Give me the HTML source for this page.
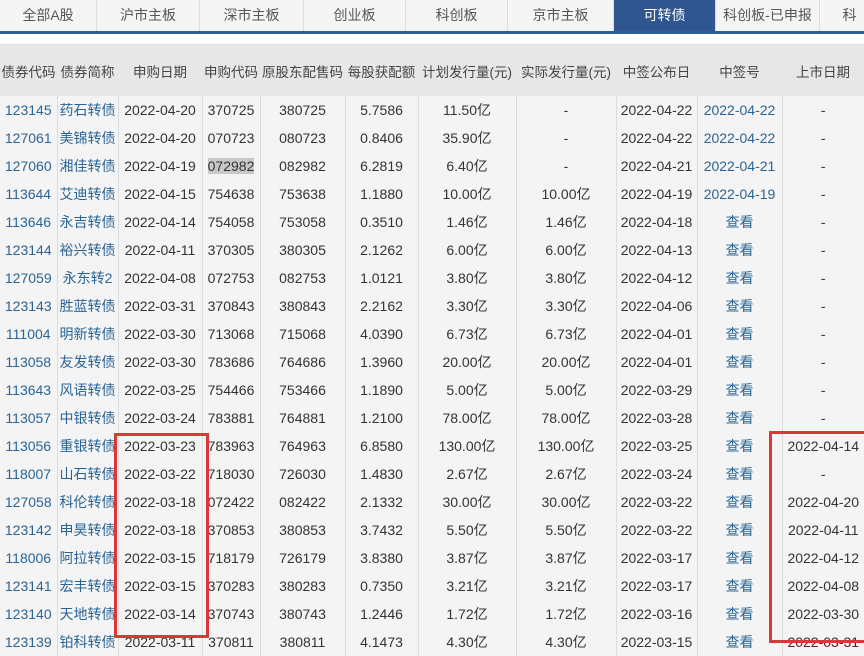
<!DOCTYPE html>
<html><head><meta charset="utf-8"><style>
body{margin:0;width:864px;height:642px;overflow:hidden;background:#fff;font-family:"Liberation Sans","Noto Sans CJK SC",sans-serif;font-size:14px;color:#333;position:relative}
.tabs{position:absolute;left:0;top:0;width:864px;height:31px;background:#f5f5f5;border-bottom:3px solid #2f5f8f}
.tab{position:absolute;top:0;height:31px;line-height:30px;text-align:center;color:#555;font-size:14px;border-right:1px solid #ddd;box-sizing:border-box}
.tab.on{background:#2f5690;color:#fff}
table{position:absolute;left:0;top:44px;border-collapse:collapse;table-layout:fixed;width:864px}
th{height:51px;background:#e7e7e7;font-weight:normal;color:#444;padding:0;white-space:nowrap;border-top:1px solid #ddd;font-size:13.5px}
td{height:28px;padding:0;text-align:center;white-space:nowrap;border-left:1px solid #dcdcdc;background:#f4f4f4;overflow:hidden}
td:first-child{border-left:none}
.l{color:#2a6496}
.r{position:absolute;border:3px solid #d9383a;box-sizing:border-box}
</style></head><body>
<div class="tabs">
<div class="tab" style="left:0;width:97px">全部A股</div>
<div class="tab" style="left:97px;width:103px">沪市主板</div>
<div class="tab" style="left:200px;width:104px">深市主板</div>
<div class="tab" style="left:304px;width:102px">创业板</div>
<div class="tab" style="left:406px;width:102px">科创板</div>
<div class="tab" style="left:508px;width:106px">京市主板</div>
<div class="tab on" style="left:614px;width:102px">可转债</div>
<div class="tab" style="left:716px;width:104px">科创板-已申报</div>
<div class="tab" style="left:820px;width:60px">科</div>
</div>
<table>
<colgroup><col style="width:57px"><col style="width:61px"><col style="width:84px"><col style="width:58px"><col style="width:85px"><col style="width:73px"><col style="width:98px"><col style="width:100px"><col style="width:81px"><col style="width:85px"><col style="width:82px"></colgroup>
<tr><th>债券代码</th><th>债券简称</th><th>申购日期</th><th>申购代码</th><th>原股东配售码</th><th>每股获配额</th><th>计划发行量(元)</th><th>实际发行量(元)</th><th>中签公布日</th><th>中签号</th><th>上市日期</th></tr>
<tr><td class="l">123145</td><td class="l">药石转债</td><td>2022-04-20</td><td>370725</td><td>380725</td><td>5.7586</td><td>11.50亿</td><td>-</td><td>2022-04-22</td><td class="l">2022-04-22</td><td>-</td></tr>
<tr><td class="l">127061</td><td class="l">美锦转债</td><td>2022-04-20</td><td>070723</td><td>080723</td><td>0.8406</td><td>35.90亿</td><td>-</td><td>2022-04-22</td><td class="l">2022-04-22</td><td>-</td></tr>
<tr><td class="l">127060</td><td class="l">湘佳转债</td><td>2022-04-19</td><td><span style="background:#c8c8c8">072982</span></td><td>082982</td><td>6.2819</td><td>6.40亿</td><td>-</td><td>2022-04-21</td><td class="l">2022-04-21</td><td>-</td></tr>
<tr><td class="l">113644</td><td class="l">艾迪转债</td><td>2022-04-15</td><td>754638</td><td>753638</td><td>1.1880</td><td>10.00亿</td><td>10.00亿</td><td>2022-04-19</td><td class="l">2022-04-19</td><td>-</td></tr>
<tr><td class="l">113646</td><td class="l">永吉转债</td><td>2022-04-14</td><td>754058</td><td>753058</td><td>0.3510</td><td>1.46亿</td><td>1.46亿</td><td>2022-04-18</td><td class="l">查看</td><td>-</td></tr>
<tr><td class="l">123144</td><td class="l">裕兴转债</td><td>2022-04-11</td><td>370305</td><td>380305</td><td>2.1262</td><td>6.00亿</td><td>6.00亿</td><td>2022-04-13</td><td class="l">查看</td><td>-</td></tr>
<tr><td class="l">127059</td><td class="l">永东转2</td><td>2022-04-08</td><td>072753</td><td>082753</td><td>1.0121</td><td>3.80亿</td><td>3.80亿</td><td>2022-04-12</td><td class="l">查看</td><td>-</td></tr>
<tr><td class="l">123143</td><td class="l">胜蓝转债</td><td>2022-03-31</td><td>370843</td><td>380843</td><td>2.2162</td><td>3.30亿</td><td>3.30亿</td><td>2022-04-06</td><td class="l">查看</td><td>-</td></tr>
<tr><td class="l">111004</td><td class="l">明新转债</td><td>2022-03-30</td><td>713068</td><td>715068</td><td>4.0390</td><td>6.73亿</td><td>6.73亿</td><td>2022-04-01</td><td class="l">查看</td><td>-</td></tr>
<tr><td class="l">113058</td><td class="l">友发转债</td><td>2022-03-30</td><td>783686</td><td>764686</td><td>1.3960</td><td>20.00亿</td><td>20.00亿</td><td>2022-04-01</td><td class="l">查看</td><td>-</td></tr>
<tr><td class="l">113643</td><td class="l">风语转债</td><td>2022-03-25</td><td>754466</td><td>753466</td><td>1.1890</td><td>5.00亿</td><td>5.00亿</td><td>2022-03-29</td><td class="l">查看</td><td>-</td></tr>
<tr><td class="l">113057</td><td class="l">中银转债</td><td>2022-03-24</td><td>783881</td><td>764881</td><td>1.2100</td><td>78.00亿</td><td>78.00亿</td><td>2022-03-28</td><td class="l">查看</td><td>-</td></tr>
<tr><td class="l">113056</td><td class="l">重银转债</td><td>2022-03-23</td><td>783963</td><td>764963</td><td>6.8580</td><td>130.00亿</td><td>130.00亿</td><td>2022-03-25</td><td class="l">查看</td><td>2022-04-14</td></tr>
<tr><td class="l">118007</td><td class="l">山石转债</td><td>2022-03-22</td><td>718030</td><td>726030</td><td>1.4830</td><td>2.67亿</td><td>2.67亿</td><td>2022-03-24</td><td class="l">查看</td><td>-</td></tr>
<tr><td class="l">127058</td><td class="l">科伦转债</td><td>2022-03-18</td><td>072422</td><td>082422</td><td>2.1332</td><td>30.00亿</td><td>30.00亿</td><td>2022-03-22</td><td class="l">查看</td><td>2022-04-20</td></tr>
<tr><td class="l">123142</td><td class="l">申昊转债</td><td>2022-03-18</td><td>370853</td><td>380853</td><td>3.7432</td><td>5.50亿</td><td>5.50亿</td><td>2022-03-22</td><td class="l">查看</td><td>2022-04-11</td></tr>
<tr><td class="l">118006</td><td class="l">阿拉转债</td><td>2022-03-15</td><td>718179</td><td>726179</td><td>3.8380</td><td>3.87亿</td><td>3.87亿</td><td>2022-03-17</td><td class="l">查看</td><td>2022-04-12</td></tr>
<tr><td class="l">123141</td><td class="l">宏丰转债</td><td>2022-03-15</td><td>370283</td><td>380283</td><td>0.7350</td><td>3.21亿</td><td>3.21亿</td><td>2022-03-17</td><td class="l">查看</td><td>2022-04-08</td></tr>
<tr><td class="l">123140</td><td class="l">天地转债</td><td>2022-03-14</td><td>370743</td><td>380743</td><td>1.2446</td><td>1.72亿</td><td>1.72亿</td><td>2022-03-16</td><td class="l">查看</td><td>2022-03-30</td></tr>
<tr><td class="l">123139</td><td class="l">铂科转债</td><td>2022-03-11</td><td>370811</td><td>380811</td><td>4.1473</td><td>4.30亿</td><td>4.30亿</td><td>2022-03-15</td><td class="l">查看</td><td>2022-03-31</td></tr>
</table>
<div class="r" style="left:114px;top:433px;width:95px;height:205px"></div>
<div class="r" style="left:769px;top:431px;width:100px;height:212px"></div>
</body></html>
